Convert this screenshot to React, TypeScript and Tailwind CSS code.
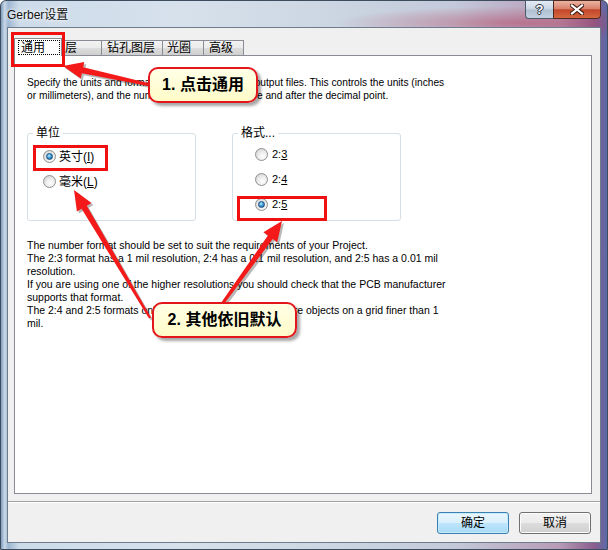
import React from "react";

function Radio({ checked }: { checked?: boolean }) {
  return (
    <span className="inline-flex w-[13px] h-[13px] shrink-0 items-center justify-center rounded-full border border-[#8f9091] bg-[radial-gradient(circle_at_60%_65%,#ffffff_0%,#ececec_45%,#c8c8c8_100%)]">
      {checked && (
        <span className="w-[7px] h-[7px] rounded-full border border-[#1c4f7c] bg-[radial-gradient(circle_at_40%_35%,#c6f0ff_0%,#49a6e0_40%,#125791_100%)]" />
      )}
    </span>
  );
}

function Arrow({ x1, y1, x2, y2 }: { x1: number; y1: number; x2: number; y2: number }) {
  const dx = x2 - x1;
  const dy = y2 - y1;
  const len = Math.sqrt(dx * dx + dy * dy);
  const ux = dx / len;
  const uy = dy / len;
  const px = -uy;
  const py = ux;
  const hl = 20;
  const bx = x2 - ux * hl;
  const by = y2 - uy * hl;
  const tw = 1.2;
  const sw = 3;
  const hw = 8.5;
  const pts = [
    [x1 + px * tw, y1 + py * tw],
    [bx + px * sw, by + py * sw],
    [bx + px * hw, by + py * hw],
    [x2, y2],
    [bx - px * hw, by - py * hw],
    [bx - px * sw, by - py * sw],
    [x1 - px * tw, y1 - py * tw],
  ];
  const s = pts.map((p) => `${p[0].toFixed(1)},${p[1].toFixed(1)}`).join(" ");
  const sh = pts.map((p) => `${(p[0] + 2).toFixed(1)},${(p[1] + 2).toFixed(1)}`).join(" ");
  return (
    <g>
      <polygon points={sh} fill="rgba(0,0,0,0.28)" />
      <polygon points={s} fill="#f41a1a" />
    </g>
  );
}

export default function App() {
  const body = [
    "The number format should be set to suit the requirements of your Project.",
    "The 2:3 format has a 1 mil resolution, 2:4 has a 0.1 mil resolution, and 2:5 has a 0.01 mil",
    "resolution.",
    "If you are using one of the higher resolutions you should check that the PCB manufacturer",
    "supports that format.",
    "The 2:4 and 2:5 formats only need to be chosen if there are objects on a grid finer than 1",
    "mil.",
  ];
  const inactiveTab =
    "h-[15px] border border-b-0 border-[#898c95] bg-[linear-gradient(180deg,#f2f2f2_0%,#ebebeb_50%,#dddddd_50%,#cfcfcf_100%)] flex items-center leading-none";
  return (
    <div className="relative w-[608px] h-[550px] overflow-hidden font-['Liberation_Sans','Noto_Sans_CJK_SC',sans-serif] text-black">
      <div className="w-full h-full flex flex-col px-[6px] pb-[6px] border border-[#3e4d5e] rounded-t-[6px] bg-[radial-gradient(ellipse_30%_3%_at_85%_4%,rgba(180,60,90,0.5),transparent),linear-gradient(90deg,#7f9cbc_0%,#c9d8e8_0.6%,#9db6d1_1.2%,#cddbe9_3%,#d6e1ec_30%,#cbd6e2_55%,#c3c9d9_75%,#b79cb7_92%,#8a5d8e_98%,#5b6aa8_100%)]">
        {/* title bar */}
        <div className="h-[26px] flex items-start">
          <span className="self-center mt-[2px] text-[12px] leading-[14px] text-[#111] [text-shadow:0_0_6px_#ffffff,0_0_3px_#ffffff]">
            Gerber设置
          </span>
          <div className="flex-1" />
          <div className="-mt-px flex h-[19px]">
            <div className="w-[28px] h-[19px] flex items-center justify-center rounded-bl-[4px] border border-[#4b5a6b] border-r-0 bg-[linear-gradient(180deg,#e4ecf4_0%,#c9d6e4_48%,#aebfd1_52%,#c2d2e2_100%)] text-[13px] leading-none font-bold text-white [text-shadow:0_0_1px_#2a3440,1px_0_0_#2a3440,-1px_0_0_#2a3440,0_1px_0_#2a3440,0_-1px_0_#2a3440]">
              ?
            </div>
            <div className="w-[48px] h-[19px] flex items-center justify-center rounded-br-[4px] border border-[#4b2a22] bg-[linear-gradient(180deg,#eab3a4_0%,#d9826b_45%,#c2462b_52%,#d5683f_100%)]">
              <svg width="14" height="11" viewBox="0 0 14 11">
                <path d="M2 1.5 L12 9.5 M12 1.5 L2 9.5" stroke="#3b1a12" strokeWidth="4.2" strokeLinecap="square" />
                <path d="M2 1.5 L12 9.5 M12 1.5 L2 9.5" stroke="#ffffff" strokeWidth="2.2" strokeLinecap="square" />
              </svg>
            </div>
          </div>
        </div>

        {/* client */}
        <div className="flex-1 flex flex-col border border-[#6f7c8b] bg-[#f0f0f0]">
          <div className="pt-[10px] pl-[6px] pr-[8px]">
            {/* tabs */}
            <div className="flex items-end h-[17px] text-[12px]">
              <div className="relative z-10 -mb-px w-[48px] h-[18px] border border-b-0 border-[#898c95] bg-white pt-[1px] pl-[3px] pr-[1px] pb-[1px]">
                <div className="h-full border border-dotted border-black flex items-center pl-[2px] leading-none">
                  通用
                </div>
              </div>
              <div className={`w-[40px] pl-[2px] ${inactiveTab}`}>层</div>
              <div className={`-ml-px w-[62px] pl-[5px] ${inactiveTab}`}>钻孔图层</div>
              <div className={`-ml-px w-[42px] pl-[4px] ${inactiveTab}`}>光圈</div>
              <div className={`-ml-px w-[41px] pl-[5px] ${inactiveTab}`}>高级</div>
            </div>
            {/* panel */}
            <div className="h-[439px] border border-[#898c95] bg-white pl-[12px] pt-[20px]">
              <div className="text-[10.2px] leading-[13px] whitespace-nowrap">
                Specify the units and format of the numbers in the output files. This controls the units (inches
                <br />
                or millimeters), and the number of digits used before and after the decimal point.
              </div>
              <div className="mt-[31px] flex gap-[36px]">
                <div className="relative w-[169px] h-[88px] rounded-[3px] border border-[#d5dfe5] pt-[10px] pl-[15px]">
                  <span className="absolute left-[5px] -top-[8px] bg-white px-[3px] text-[12px] leading-[14px]">单位</span>
                  <div className="h-[25px] flex items-center gap-[3px] text-[12px]">
                    <Radio checked />
                    <span>
                      英寸(<span className="underline">I</span>)
                    </span>
                  </div>
                  <div className="h-[25px] flex items-center gap-[3px] text-[12px]">
                    <Radio />
                    <span>
                      毫米(<span className="underline">L</span>)
                    </span>
                  </div>
                </div>
                <div className="relative w-[169px] h-[88px] rounded-[3px] border border-[#d5dfe5] pt-[8px] pl-[22px]">
                  <span className="absolute left-[5px] -top-[8px] bg-white px-[3px] text-[12px] leading-[14px]">格式...</span>
                  <div className="h-[25px] flex items-center gap-[4px] text-[11px]">
                    <Radio />
                    <span>
                      2:<span className="underline">3</span>
                    </span>
                  </div>
                  <div className="h-[25px] flex items-center gap-[4px] text-[11px]">
                    <Radio />
                    <span>
                      2:<span className="underline">4</span>
                    </span>
                  </div>
                  <div className="h-[25px] flex items-center gap-[4px] text-[11px]">
                    <Radio checked />
                    <span>
                      2:<span className="underline">5</span>
                    </span>
                  </div>
                </div>
              </div>
              <div className="mt-[18px] text-[10.5px] leading-[13px] whitespace-nowrap">
                {body.map((l, i) => (
                  <div key={i}>{l}</div>
                ))}
              </div>
            </div>
          </div>
          <div className="mt-[7px] h-[2px] border-t border-[#a0a0a0] bg-white" />
          <div className="mt-[9px] flex justify-end gap-[10px] pr-[9px]">
            <button className="w-[72px] h-[22px] rounded-[3px] border border-[#3c7fb1] bg-[linear-gradient(180deg,#eaf6fd_0%,#d9f0fc_50%,#bee6fd_50%,#a7d9f5_100%)] shadow-[inset_0_0_0_1px_#c5ecfd] text-[12px] leading-none">
              确定
            </button>
            <button className="w-[72px] h-[22px] rounded-[3px] border border-[#707070] bg-[linear-gradient(180deg,#f2f2f2_0%,#ebebeb_50%,#dddddd_50%,#cfcfcf_100%)] shadow-[inset_0_0_0_1px_#fcfcfc] text-[12px] leading-none">
              取消
            </button>
          </div>
        </div>
      </div>

      {/* annotation overlays */}
      <div className="absolute left-[11px] top-[32px] w-[54px] h-[35px] border-[3px] border-[#f01010]" />
      <div className="absolute left-[33px] top-[145px] w-[75px] h-[26px] border-[3px] border-[#f01010]" />
      <div className="absolute left-[237px] top-[196px] w-[90px] h-[25px] border-[3px] border-[#f01010]" />

      <svg className="absolute left-0 top-0 pointer-events-none" width="608" height="550">
        <Arrow x1={155} y1={86} x2={63} y2={66} />
        <Arrow x1={150} y1={318} x2={74} y2={190} />
        <Arrow x1={212} y1={318} x2={282} y2={221} />
      </svg>

      <div className="absolute left-[148px] top-[67px] w-[110px] h-[36px] rounded-[10px] border-2 border-[#e3161c] bg-[linear-gradient(180deg,#ffffe6_0%,#fffbc8_100%)] shadow-[3px_3px_3px_rgba(0,0,0,0.35)] flex items-center justify-center text-[16px] font-bold leading-none">
        1. 点击通用
      </div>
      <div className="absolute left-[152px] top-[302px] w-[145px] h-[36px] rounded-[10px] border-2 border-[#e3161c] bg-[linear-gradient(180deg,#ffffe6_0%,#fffbc8_100%)] shadow-[3px_3px_3px_rgba(0,0,0,0.35)] flex items-center justify-center text-[16px] font-bold leading-none">
        2. 其他依旧默认
      </div>
    </div>
  );
}
